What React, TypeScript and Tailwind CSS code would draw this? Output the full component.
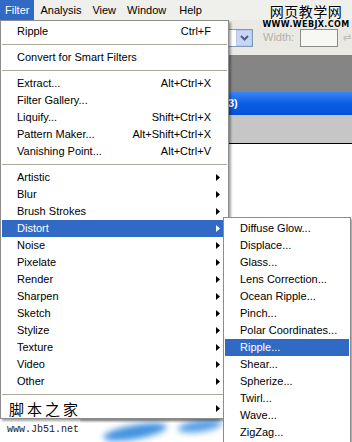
import clsx from "clsx";

type Entry =
  | { kind: "sep" }
  | { kind: "item"; label: string; shortcut?: string; arrow?: boolean; active?: boolean };

const mainItems: Entry[] = [
  { kind: "item", label: "Ripple", shortcut: "Ctrl+F" },
  { kind: "sep" },
  { kind: "item", label: "Convert for Smart Filters" },
  { kind: "sep" },
  { kind: "item", label: "Extract...", shortcut: "Alt+Ctrl+X" },
  { kind: "item", label: "Filter Gallery..." },
  { kind: "item", label: "Liquify...", shortcut: "Shift+Ctrl+X" },
  { kind: "item", label: "Pattern Maker...", shortcut: "Alt+Shift+Ctrl+X" },
  { kind: "item", label: "Vanishing Point...", shortcut: "Alt+Ctrl+V" },
  { kind: "sep" },
  { kind: "item", label: "Artistic", arrow: true },
  { kind: "item", label: "Blur", arrow: true },
  { kind: "item", label: "Brush Strokes", arrow: true },
  { kind: "item", label: "Distort", arrow: true, active: true },
  { kind: "item", label: "Noise", arrow: true },
  { kind: "item", label: "Pixelate", arrow: true },
  { kind: "item", label: "Render", arrow: true },
  { kind: "item", label: "Sharpen", arrow: true },
  { kind: "item", label: "Sketch", arrow: true },
  { kind: "item", label: "Stylize", arrow: true },
  { kind: "item", label: "Texture", arrow: true },
  { kind: "item", label: "Video", arrow: true },
  { kind: "item", label: "Other", arrow: true },
  { kind: "sep" },
];

const distortItems = [
  "Diffuse Glow...",
  "Displace...",
  "Glass...",
  "Lens Correction...",
  "Ocean Ripple...",
  "Pinch...",
  "Polar Coordinates...",
  "Ripple...",
  "Shear...",
  "Spherize...",
  "Twirl...",
  "Wave...",
  "ZigZag...",
];

const menuBar = [
  { label: "Filter", cls: "px-[5px] bg-[#316ac5] text-white" },
  { label: "Analysis", cls: "pl-[6px] pr-[5px]" },
  { label: "View", cls: "pl-[6px] pr-[5px]" },
  { label: "Window", cls: "pl-[6px] pr-[6px]" },
  { label: "Help", cls: "pl-[7px] pr-[5px]" },
];

function Arrow({ white }: { white?: boolean }) {
  return (
    <svg width="4" height="7" viewBox="0 0 4 7" className="shrink-0">
      <polygon points="0,0 4,3.5 0,7" fill={white ? "#ffffff" : "#000000"} />
    </svg>
  );
}

function Separator() {
  return (
    <div className="h-[9px] flex items-center">
      <div className="h-px w-full bg-[#aca899]" />
    </div>
  );
}

function Row({ label, shortcut, arrow, active }: { label: string; shortcut?: string; arrow?: boolean; active?: boolean }) {
  return (
    <div
      className={clsx(
        "flex items-center h-[17px] pl-[15px] whitespace-nowrap",
        arrow ? "pr-[7px]" : "pr-[16px]",
        active ? "bg-[#316ac5] text-white" : "text-black"
      )}
    >
      <span className="flex-1">{label}</span>
      {shortcut && <span>{shortcut}</span>}
      {arrow && <Arrow white={active} />}
    </div>
  );
}

export default function App() {
  return (
    <div className="relative w-[352px] h-[442px] overflow-hidden bg-white font-['Liberation_Sans',Arial,sans-serif] text-[11px] leading-none">
      {/* menu bar */}
      <div className="flex h-[20px] bg-[#efefec] items-stretch text-black">
        {menuBar.map((m) => (
          <div key={m.label} className={clsx("flex items-center", m.cls)}>
            {m.label}
          </div>
        ))}
      </div>

      {/* options toolbar */}
      <div className="flex items-center h-[35px] bg-[#eae9e3] pl-[200px]">
        <div className="flex items-center justify-end w-[53px] h-[18px] border border-[#7f9db9] bg-white">
          <div className="flex items-center justify-center w-[16px] h-[16px] bg-[#c6d6f3] border border-[#b5c8ec]">
            <svg width="9" height="6" viewBox="0 0 9 6">
              <polyline points="1,1 4.5,4.5 8,1" fill="none" stroke="#4d6185" strokeWidth="2" />
            </svg>
          </div>
        </div>
        <span className="ml-[10px] text-[#b3b1a8]">Width:</span>
        <div className="ml-[6px] w-[38px] h-[18px] border border-[#8c8c8c] bg-[#f7f7f4]" />
        <span className="ml-[5px] text-[#c0c0c0] text-[10px]">⇄</span>
      </div>

      {/* workspace */}
      <div className="h-[37px] bg-[#858585]" />
      <div className="h-[23px] flex items-center pl-[228px] bg-gradient-to-b from-[#3a86f7] via-[#0a5de6] to-[#0652d6] text-white font-bold">
        3)
      </div>
      <div className="h-[29px] bg-[#c6c6c6] border-b border-black" />
      <div className="h-[298px] bg-white" />

      {/* blurry blue shapes at the bottom */}
      <svg className="absolute left-[80px] top-[412px]" width="150" height="30" viewBox="0 0 150 30">
        <defs>
          <filter id="b" x="-50%" y="-50%" width="200%" height="200%">
            <feGaussianBlur stdDeviation="3" />
          </filter>
          <filter id="s" x="-50%" y="-50%" width="200%" height="200%">
            <feGaussianBlur stdDeviation="1.5" />
          </filter>
        </defs>
        <rect x="0" y="6" width="140" height="3" fill="#6d6d6d" opacity="0.5" filter="url(#s)" />
        <ellipse cx="55" cy="20" rx="32" ry="7" fill="#2f86dc" opacity="0.9" transform="rotate(-10 55 20)" filter="url(#b)" />
        <ellipse cx="120" cy="14" rx="22" ry="6" fill="#3a90e2" opacity="0.85" transform="rotate(-8 120 14)" filter="url(#b)" />
      </svg>

      <div className="absolute left-[7px] top-[425px] font-['Liberation_Mono',monospace] text-[10px] text-[#222]">
        www.Jb51.net
      </div>

      {/* watermark top right */}
      <div className="absolute left-[268px] top-[3px] w-[76px] flex flex-col items-center text-black [text-shadow:0_0_2px_#fff]">
        <span className="font-['Noto_Sans_CJK_SC',sans-serif] text-[14px] tracking-[0.5px] leading-[17px]">网页教学网</span>
        <span className="font-['DejaVu_Sans',sans-serif] font-bold text-[8px] tracking-[0.4px] leading-[9px]">WWW.WEBJX.COM</span>
      </div>

      {/* Filter dropdown */}
      <div className="absolute left-0 top-[20px] w-[229px] border border-[#8c8c8c] bg-white pt-[2px] px-[1px] shadow-[2px_2px_2px_rgba(0,0,0,0.35)]">
        {mainItems.map((e, i) =>
          e.kind === "sep" ? (
            <Separator key={i} />
          ) : (
            <Row key={i} label={e.label} shortcut={e.shortcut} arrow={e.arrow} active={e.active} />
          )
        )}
        <div className="flex items-center h-[19px] pl-[7px] pr-[7px]">
          <span className="flex-1 font-['Noto_Sans_CJK_SC',sans-serif] text-[15px] tracking-[3px] text-black">脚本之家</span>
          <Arrow />
        </div>
      </div>

      {/* Distort submenu */}
      <div className="absolute left-[223px] top-[217px] w-[128px] border border-[#8c8c8c] bg-white pt-[2px] px-[1px] pb-[3px] shadow-[2px_2px_2px_rgba(0,0,0,0.35)]">
        {distortItems.map((d) => (
          <Row key={d} label={d} active={d === "Ripple..."} />
        ))}
      </div>
    </div>
  );
}
